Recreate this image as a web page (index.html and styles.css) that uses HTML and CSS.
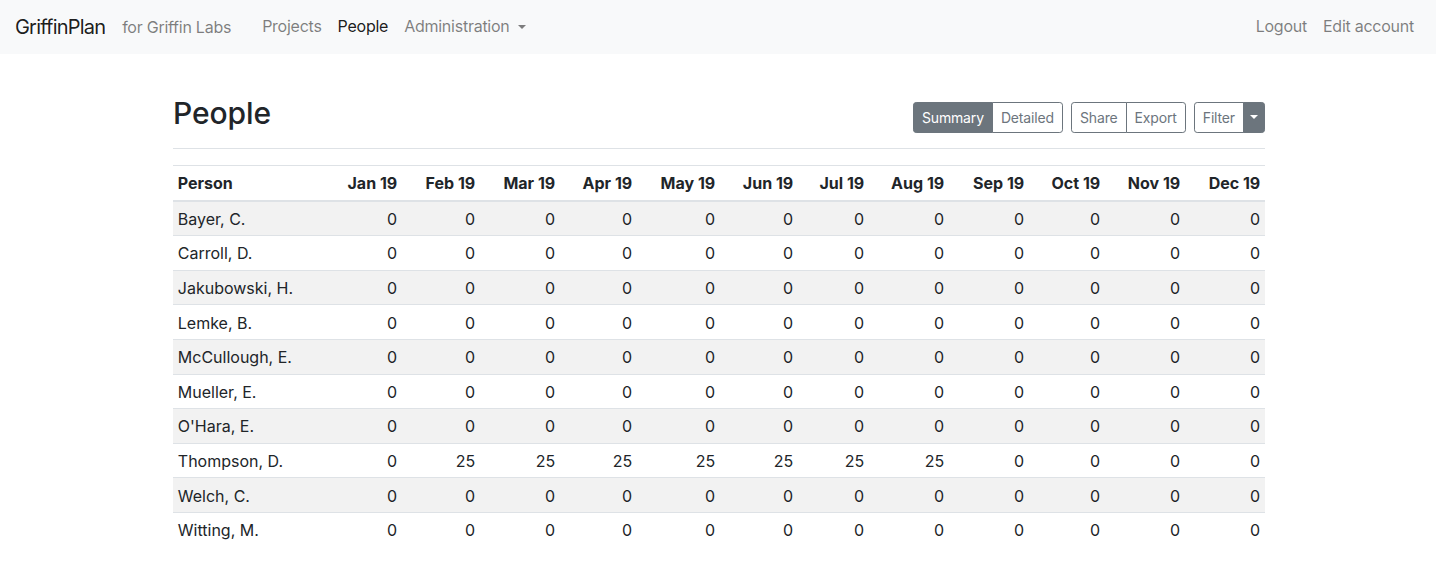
FILE: index.html
```html
<!DOCTYPE html>
<html lang="en">
<head>
<meta charset="utf-8">
<title>People - GriffinPlan</title>
<link rel="stylesheet" href="styles.css">
</head>
<body>
<nav class="navbar">
  <a class="brand" href="#">GriffinPlan</a>
  <span class="navbar-text">for Griffin Labs</span>
  <ul class="nav nav-main">
    <li><a class="nav-link" href="#">Projects</a></li>
    <li><a class="nav-link active" href="#">People</a></li>
    <li><a class="nav-link dropdown-toggle" href="#">Administration</a></li>
  </ul>
  <ul class="nav nav-right">
    <li><a class="nav-link" href="#">Logout</a></li>
    <li><a class="nav-link" href="#">Edit account</a></li>
  </ul>
</nav>
<main class="container">
  <div class="page-header">
    <h1 class="title">People</h1>
    <div class="toolbar">
      <div class="btn-group">
        <button class="btn btn-active">Summary</button>
        <button class="btn">Detailed</button>
      </div>
      <div class="btn-group">
        <button class="btn">Share</button>
        <button class="btn">Export</button>
      </div>
      <div class="btn-group">
        <button class="btn">Filter</button>
        <button class="btn btn-active btn-split"><span class="caret"></span></button>
      </div>
    </div>
  </div>
  <table class="table">
    <thead>
      <tr>
        <th class="left">Person</th>
        <th>Jan 19</th><th>Feb 19</th><th>Mar 19</th><th>Apr 19</th><th>May 19</th><th>Jun 19</th>
        <th>Jul 19</th><th>Aug 19</th><th>Sep 19</th><th>Oct 19</th><th>Nov 19</th><th>Dec 19</th>
      </tr>
    </thead>
    <tbody>
      <tr><td class="left">Bayer, C.</td><td>0</td><td>0</td><td>0</td><td>0</td><td>0</td><td>0</td><td>0</td><td>0</td><td>0</td><td>0</td><td>0</td><td>0</td></tr>
      <tr><td class="left">Carroll, D.</td><td>0</td><td>0</td><td>0</td><td>0</td><td>0</td><td>0</td><td>0</td><td>0</td><td>0</td><td>0</td><td>0</td><td>0</td></tr>
      <tr><td class="left">Jakubowski, H.</td><td>0</td><td>0</td><td>0</td><td>0</td><td>0</td><td>0</td><td>0</td><td>0</td><td>0</td><td>0</td><td>0</td><td>0</td></tr>
      <tr><td class="left">Lemke, B.</td><td>0</td><td>0</td><td>0</td><td>0</td><td>0</td><td>0</td><td>0</td><td>0</td><td>0</td><td>0</td><td>0</td><td>0</td></tr>
      <tr><td class="left">McCullough, E.</td><td>0</td><td>0</td><td>0</td><td>0</td><td>0</td><td>0</td><td>0</td><td>0</td><td>0</td><td>0</td><td>0</td><td>0</td></tr>
      <tr><td class="left">Mueller, E.</td><td>0</td><td>0</td><td>0</td><td>0</td><td>0</td><td>0</td><td>0</td><td>0</td><td>0</td><td>0</td><td>0</td><td>0</td></tr>
      <tr><td class="left">O'Hara, E.</td><td>0</td><td>0</td><td>0</td><td>0</td><td>0</td><td>0</td><td>0</td><td>0</td><td>0</td><td>0</td><td>0</td><td>0</td></tr>
      <tr><td class="left">Thompson, D.</td><td>0</td><td>25</td><td>25</td><td>25</td><td>25</td><td>25</td><td>25</td><td>25</td><td>0</td><td>0</td><td>0</td><td>0</td></tr>
      <tr><td class="left">Welch, C.</td><td>0</td><td>0</td><td>0</td><td>0</td><td>0</td><td>0</td><td>0</td><td>0</td><td>0</td><td>0</td><td>0</td><td>0</td></tr>
      <tr><td class="left">Witting, M.</td><td>0</td><td>0</td><td>0</td><td>0</td><td>0</td><td>0</td><td>0</td><td>0</td><td>0</td><td>0</td><td>0</td><td>0</td></tr>
    </tbody>
  </table>
</main>
</body>
</html>
```

FILE: styles.css
```css
* { box-sizing: border-box; }
html, body { margin: 0; padding: 0; }
body {
  font-family: Inter, "Liberation Sans", sans-serif;
  font-size: 16px;
  line-height: 1.5;
  color: #212529;
  background: #fff;
}
a { text-decoration: none; }

.navbar {
  display: flex;
  align-items: center;
  height: 54px;
  padding: 0 14px 0 15px;
  background: #f8f9fa;
  letter-spacing: -0.25px;
}
.brand {
  font-size: 20px;
  line-height: 30px;
  color: rgba(0, 0, 0, 0.9);
  margin-right: 17px;
  letter-spacing: -0.8px;
}
.navbar-text {
  color: rgba(0, 0, 0, 0.5);
  margin-right: 23px;
}
.nav {
  display: flex;
  list-style: none;
  margin: 0;
  padding: 0;
}
.nav-right { margin-left: auto; }
.nav-link {
  display: block;
  padding: 7px 8px 9px;
  color: rgba(0, 0, 0, 0.5);
}
.nav-link.active { color: rgba(0, 0, 0, 0.9); }
.dropdown-toggle::after {
  content: "";
  display: inline-block;
  margin-left: 8px;
  vertical-align: 3px;
  border-top: 4.8px solid;
  border-left: 4.8px solid transparent;
  border-right: 4.8px solid transparent;
}

.container {
  width: 1094px;
  padding-left: 2px;
  margin: 0 auto;
}
.page-header {
  display: flex;
  justify-content: space-between;
  align-items: center;
  padding-top: 40px;
  padding-bottom: 8px;
  margin-bottom: 16px;
  border-bottom: 1px solid #dee2e6;
}
.title {
  margin: 0 0 8px;
  font-size: 30px;
  font-weight: 500;
  line-height: 38px;
  letter-spacing: -0.1px;
}
.toolbar {
  display: flex;
  gap: 8px;
}
.btn-group { display: flex; }
.btn {
  font-family: inherit;
  font-size: 14px;
  line-height: 21px;
  padding: 4px 8px;
  color: #6c757d;
  background: #fff;
  border: 1px solid #6c757d;
  border-radius: 0;
  margin: 0;
  letter-spacing: -0.15px;
}
.btn + .btn { margin-left: -1px; }
.btn:first-child { border-top-left-radius: 3.2px; border-bottom-left-radius: 3.2px; }
.btn:last-child { border-top-right-radius: 3.2px; border-bottom-right-radius: 3.2px; }
.btn-active { background: #6c757d; color: #fff; }
.btn-split {
  width: 22px;
  padding: 4px 0;
  display: flex;
  align-items: center;
  justify-content: center;
}
.caret {
  display: block;
  border-top: 4.2px solid #fff;
  border-left: 4.2px solid transparent;
  border-right: 4.2px solid transparent;
}

.table {
  width: 1092px;
  border-collapse: collapse;
  table-layout: fixed;
}
.table th, .table td {
  padding: 5.3px 4.8px 4.3px;
  text-align: right;
  border-top: 1px solid #dee2e6;
  vertical-align: top;
  white-space: nowrap;
}
.table th { font-weight: 700; border-bottom: 2px solid #dee2e6; }
.table .left { text-align: left; }
.table tbody tr:nth-child(odd) { background: #f2f2f2; }
.table tbody tr:first-child td { border-top: 0; }

.table th:nth-child(1) { width: 153px; }
.table th:nth-child(2) { width: 76px; }
.table th:nth-child(3) { width: 78px; }
.table th:nth-child(4) { width: 80px; }
.table th:nth-child(5) { width: 77px; }
.table th:nth-child(6) { width: 83px; }
.table th:nth-child(7) { width: 78px; }
.table th:nth-child(8) { width: 71px; }
.table th:nth-child(9) { width: 80px; }
.table th:nth-child(10) { width: 80px; }
.table th:nth-child(11) { width: 76px; }
.table th:nth-child(12) { width: 80px; }
.table th:nth-child(13) { width: 80px; }
```
